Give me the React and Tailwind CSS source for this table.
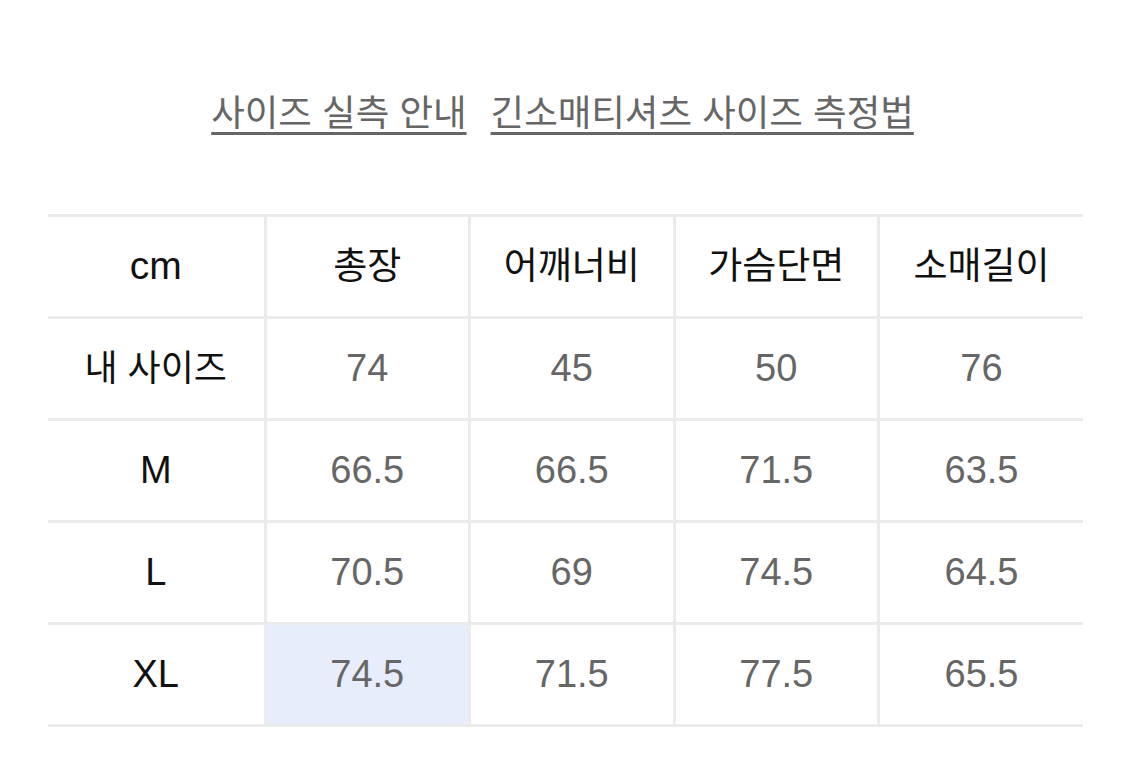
import React from 'react';

const columns = ['총장', '어깨너비', '가슴단면', '소매길이'];

const rows = [
  { label: '내 사이즈', values: ['74', '45', '50', '76'] },
  { label: 'M', values: ['66.5', '66.5', '71.5', '63.5'] },
  { label: 'L', values: ['70.5', '69', '74.5', '64.5'] },
  { label: 'XL', values: ['74.5', '71.5', '77.5', '65.5'], highlight: 0 },
];

const App = () => {
  return (
    <div className="w-[1125px] h-[760px] bg-white font-['Liberation_Sans','Noto_Sans_CJK_KR',sans-serif]">
      <div className="flex justify-center gap-[24px] pt-[90px] text-[36.5px] leading-[48px] text-[#666]">
        <span className="underline decoration-[3px] underline-offset-[6px]">사이즈 실측 안내</span>
        <span className="underline decoration-[3px] underline-offset-[6px]">긴소매티셔츠 사이즈 측정법</span>
      </div>

      <div className="pl-[48px] pr-[42px] pt-[76px]">
        <table className="w-full border-collapse table-fixed">
          <colgroup>
            <col className="w-[217px]" />
            <col />
            <col />
            <col />
            <col />
          </colgroup>
          <thead>
            <tr className="h-[102px] border-y-[3px] border-[#ebebeb]">
              <th className="font-normal text-[39px] text-[#111] border-r-[3px] border-[#ebebeb]">cm</th>
              {columns.map((c, i) => (
                <th
                  key={c}
                  className={`font-normal text-[37px] text-[#111] ${i < 3 ? 'border-r-[3px] border-[#ebebeb]' : ''}`}
                >
                  {c}
                </th>
              ))}
            </tr>
          </thead>
          <tbody>
            {rows.map((r) => (
              <tr key={r.label} className="h-[102px] border-b-[3px] border-[#ebebeb]">
                <td className={`text-center text-[#111] border-r-[3px] border-[#ebebeb] ${r.label === '내 사이즈' ? 'text-[36px]' : 'text-[38px]'}`}>
                  {r.label}
                </td>
                {r.values.map((v, i) => (
                  <td
                    key={i}
                    className={`text-center text-[38px] text-[#666] ${i < 3 ? 'border-r-[3px] border-[#ebebeb]' : ''} ${r.highlight === i ? 'bg-[#e8edfb]' : ''}`}
                  >
                    {v}
                  </td>
                ))}
              </tr>
            ))}
          </tbody>
        </table>
      </div>
    </div>
  );
};

export default App;
